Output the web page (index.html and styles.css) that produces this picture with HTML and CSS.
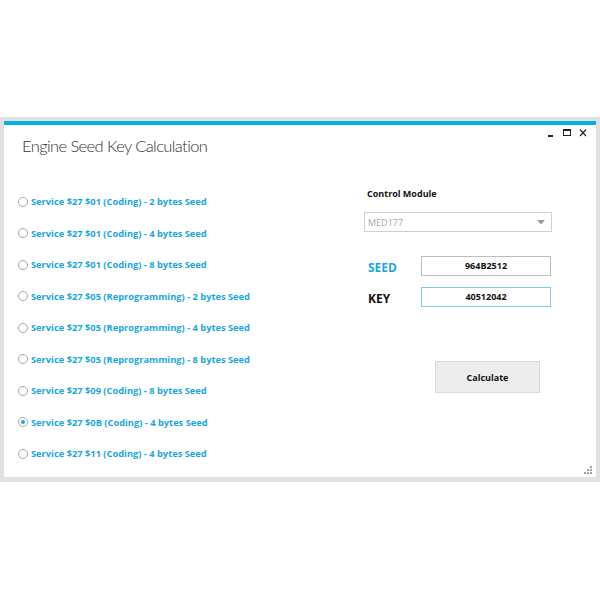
FILE: index.html
```html
<!DOCTYPE html>
<html lang="en">
<head>
  <meta charset="UTF-8" />
  <title>Engine Seed Key Calculation</title>
  <link rel="stylesheet" href="styles.css">
</head>
<body>
  <div class="window">
    <div class="accent"></div>
    <div class="titlebar">
      <h1>Engine Seed Key Calculation</h1>
      <div class="controls">
        <svg width="10" height="10" viewBox="0 0 10 10"><rect x="2" y="7" width="5" height="2" fill="#222"/></svg>
        <svg width="10" height="10" viewBox="0 0 10 10"><rect x="1.5" y="1.5" width="7" height="6" fill="none" stroke="#222" stroke-width="1"/><rect x="1.5" y="1.5" width="7" height="1.5" fill="#222"/></svg>
        <svg width="10" height="10" viewBox="0 0 10 10"><path d="M2 1.5 L8 8 M8 1.5 L2 8" stroke="#222" stroke-width="1.2"/></svg>
      </div>
    </div>
    <div class="main">
      <div class="services">
        <label class="option"><span class="radio"></span>Service $27 $01 (Coding) - 2 bytes Seed</label>
        <label class="option"><span class="radio"></span>Service $27 $01 (Coding) - 4 bytes Seed</label>
        <label class="option"><span class="radio"></span>Service $27 $01 (Coding) - 8 bytes Seed</label>
        <label class="option"><span class="radio"></span>Service $27 $05 (Reprogramming) - 2 bytes Seed</label>
        <label class="option"><span class="radio"></span>Service $27 $05 (Reprogramming) - 4 bytes Seed</label>
        <label class="option"><span class="radio"></span>Service $27 $05 (Reprogramming) - 8 bytes Seed</label>
        <label class="option"><span class="radio"></span>Service $27 $09 (Coding) - 8 bytes Seed</label>
        <label class="option"><span class="radio checked"></span>Service $27 $0B (Coding) - 4 bytes Seed</label>
        <label class="option"><span class="radio"></span>Service $27 $11 (Coding) - 4 bytes Seed</label>
      </div>
      <div class="module">
        <div class="module-label">Control Module</div>
        <div class="select">
          <span>MED177</span>
          <svg width="8" height="5" viewBox="0 0 8 5"><path d="M0 0 L8 0 L4 4.5 Z" fill="#9a9a9a"/></svg>
        </div>
        <div class="field first">
          <span class="field-label seed">SEED</span>
          <div class="box">964B2512</div>
        </div>
        <div class="field">
          <span class="field-label">KEY</span>
          <div class="box active">40512042</div>
        </div>
        <button class="calc">Calculate</button>
      </div>
    </div>
    <div class="grip">
      <svg width="9" height="9" viewBox="0 0 9 9" fill="#a0a0a0">
        <rect x="6" y="0" width="2" height="2"/>
        <rect x="3" y="3" width="2" height="2"/><rect x="6" y="3" width="2" height="2"/>
        <rect x="0" y="6" width="2" height="2"/><rect x="3" y="6" width="2" height="2"/><rect x="6" y="6" width="2" height="2"/>
      </svg>
    </div>
  </div>
</body>
</html>
```

FILE: styles.css
```css
body {
  margin: 0;
  background: #ffffff;
  font-family: "Open Sans", "Noto Sans", sans-serif;
}

.window {
  position: relative;
  margin-top: 117px;
  height: 356px;
  background: #ffffff;
  border: 4px solid #e2e2e2;
  border-bottom-width: 5px;
}

.accent {
  height: 4px;
  background: #00b2de;
}

.titlebar {
  display: flex;
  justify-content: space-between;
  align-items: flex-start;
}

h1 {
  margin: 10px 0 0 18px;
  font-family: Lato, "Open Sans", sans-serif;
  font-size: 16.5px;
  line-height: 22px;
  font-weight: 300;
  letter-spacing: -0.6px;
  color: #333333;
}

.controls {
  display: flex;
  gap: 6px;
  margin: 3px 8px 0 0;
}

.main {
  display: flex;
  margin-top: 29px;
}

.services {
  display: flex;
  flex-direction: column;
  width: 346px;
  padding-left: 14px;
}

.option {
  display: flex;
  align-items: center;
  gap: 3px;
  height: 31.5px;
  font-size: 9.3px;
  font-weight: 700;
  color: #1ba6dc;
}

.radio {
  width: 8px;
  height: 8px;
  border: 1px solid #a8a8a8;
  border-radius: 50%;
  background: #ffffff;
  position: relative;
}

.radio.checked::after {
  content: "";
  position: absolute;
  left: 2px;
  top: 2px;
  width: 4px;
  height: 4px;
  border-radius: 50%;
  background: #1ba6dc;
}

.module {
  display: flex;
  flex-direction: column;
  width: 188px;
}

.module-label {
  padding-left: 3px;
  font-size: 9px;
  font-weight: 700;
  line-height: 16px;
  color: #111111;
}

.select {
  display: flex;
  justify-content: space-between;
  align-items: center;
  margin-top: 10px;
  height: 18px;
  padding: 0 6px 0 3px;
  border: 1px solid #d0d0d0;
  font-size: 9px;
  color: #a8a8a8;
}

.field {
  display: flex;
  align-items: center;
  margin-top: 10px;
}

.field.first {
  margin-top: 23px;
}

.field-label {
  width: 53px;
  padding: 4px 0 0 4px;
  font-size: 12px;
  font-weight: 700;
  color: #111111;
}

.field-label.seed {
  color: #1ba6dc;
}

.box {
  width: 128px;
  height: 18px;
  border: 1px solid #bdbdbd;
  text-align: center;
  font-size: 9px;
  font-weight: 700;
  line-height: 17px;
  color: #111111;
}

.box.active {
  border-color: #7ccbe8;
}

.calc {
  margin: 54px 0 0 71px;
  width: 105px;
  height: 32px;
  background: #ececec;
  border: 1px solid #dadada;
  font-family: inherit;
  font-size: 9px;
  font-weight: 700;
  color: #111111;
}

.grip {
  position: absolute;
  right: 3px;
  bottom: 2px;
  line-height: 0;
}
```
